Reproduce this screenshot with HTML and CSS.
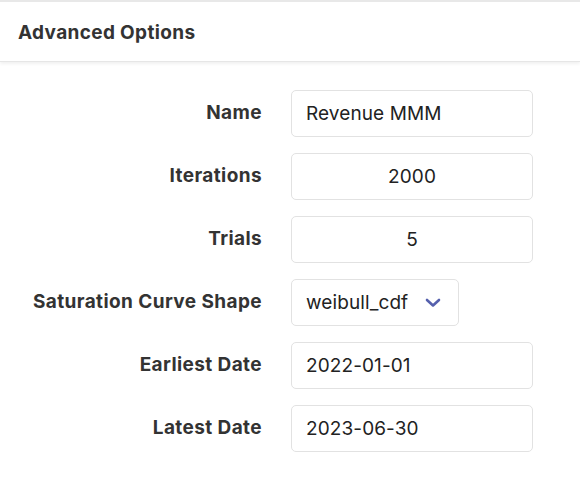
FILE: index.html
```html
<!DOCTYPE html>
<html>
<head>
<meta charset="utf-8">
<link rel="stylesheet" href="styles.css">
</head>
<body>
<div class="panel">
  <div class="header">Advanced Options</div>
  <div class="form">
    <div class="row">
      <label class="label">Name</label>
      <input class="field" type="text" value="Revenue MMM">
    </div>
    <div class="row">
      <label class="label">Iterations</label>
      <input class="field num" type="text" value="2000">
    </div>
    <div class="row">
      <label class="label">Trials</label>
      <input class="field num" type="text" value="5">
    </div>
    <div class="row">
      <label class="label">Saturation Curve Shape</label>
      <div class="field select">
        <span>weibull_cdf</span>
        <svg class="chev" width="16" height="10" viewBox="0 0 16 10"><path d="M2 2 L8 7.5 L14 2" fill="none" stroke="#5560ad" stroke-width="2.6" stroke-linecap="round" stroke-linejoin="round"/></svg>
      </div>
    </div>
    <div class="row">
      <label class="label">Earliest Date</label>
      <input class="field" type="text" value="2022-01-01">
    </div>
    <div class="row">
      <label class="label">Latest Date</label>
      <input class="field" type="text" value="2023-06-30">
    </div>
  </div>
</div>
</body>
</html>
```
FILE: styles.css
```css
html, body {
  margin: 0;
  padding: 0;
  background: #fff;
}
body {
  font-family: Inter, "Noto Sans", sans-serif;
  color: #333;
}
.panel {
  width: 580px;
}
.header {
  height: 57px;
  border-top: 2px solid #e8e8e8;
  border-bottom: 1px solid #e6e6e6;
  box-shadow: 0 2px 3px rgba(0,0,0,0.06);
  box-sizing: content-box;
  display: flex;
  align-items: center;
  padding-left: 18px;
  padding-top: 2px;
  font-size: 19px;
  letter-spacing: 0.35px;
  font-weight: 700;
  color: #333;
}
.form {
  display: flex;
  flex-direction: column;
  gap: 16px;
  padding-top: 28px;
}
.row {
  display: grid;
  grid-template-columns: 262px auto;
  column-gap: 29px;
  align-items: center;
}
.label {
  text-align: right;
  font-size: 19px;
  letter-spacing: 0.4px;
  font-weight: 700;
  color: #333;
  position: relative;
  top: -1px;
}
.field {
  box-sizing: border-box;
  width: 242px;
  height: 47px;
  border: 1px solid #e2e2e2;
  border-radius: 5px;
  padding: 0 14px;
  font-family: Inter, "Noto Sans", sans-serif;
  font-size: 19px;
  letter-spacing: 0.1px;
  color: #222;
  background: #fff;
  outline: none;
  margin: 0;
}
.num {
  text-align: center;
}
.select {
  width: 168px;
  display: flex;
  align-items: center;
  gap: 17px;
}
.chev {
  display: block;
}
```
